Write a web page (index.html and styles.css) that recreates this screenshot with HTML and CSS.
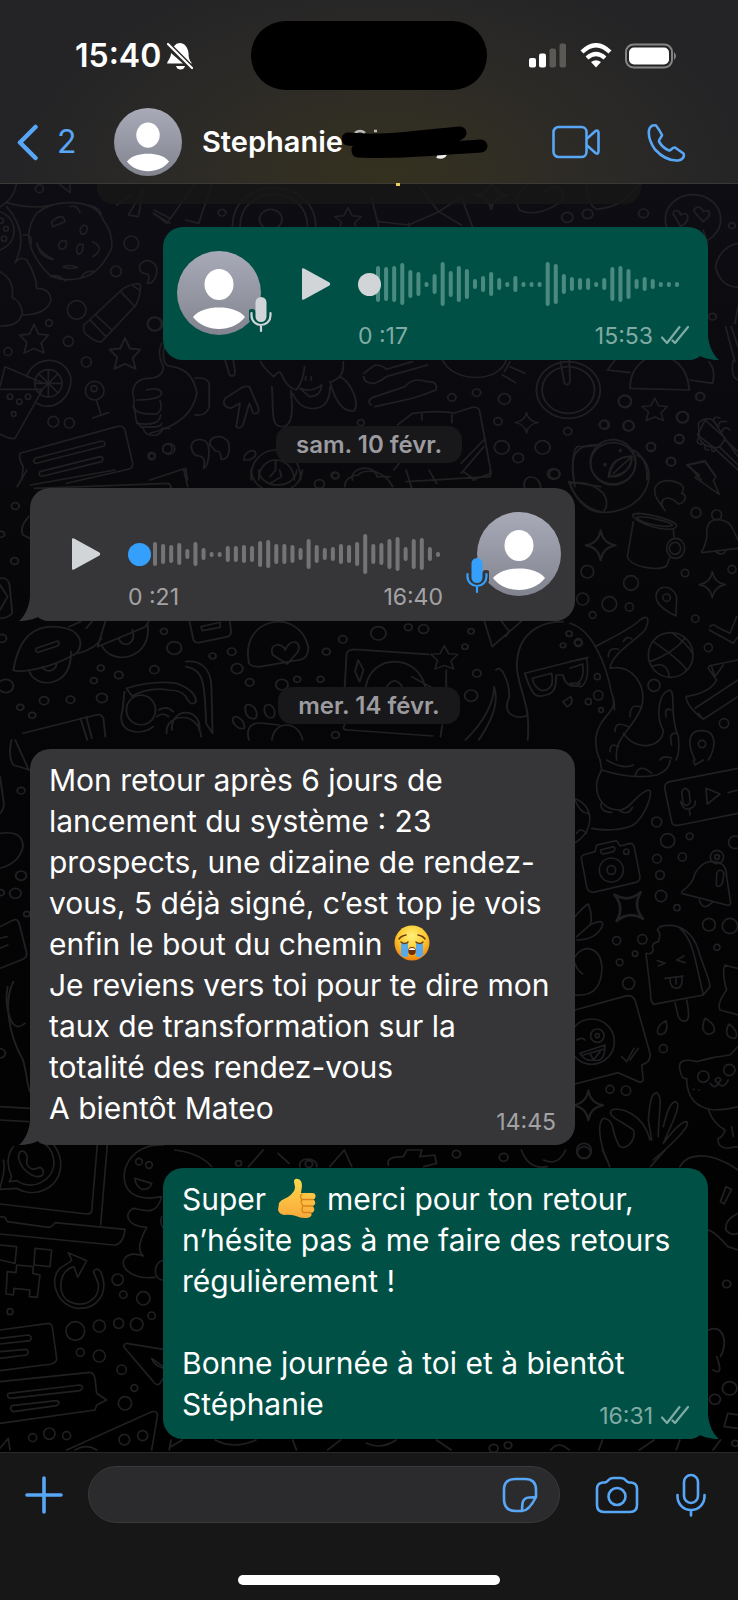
FILE: index.html
```html
<!DOCTYPE html>
<html lang="fr">
<head>
<meta charset="utf-8">
<meta name="viewport" content="width=device-width, initial-scale=1">
<title>Stephanie</title>
<link rel="stylesheet" href="styles.css">
</head>
<body>
<svg class="defs" aria-hidden="true">
  <defs>
    <linearGradient id="avatar-fill" x1="0" y1="0" x2="0" y2="1"><stop offset="0" stop-color="#a9aab8"/><stop offset="1" stop-color="#81848f"/></linearGradient>
    <radialGradient id="face-fill" cx=".5" cy=".3" r=".75"><stop offset="0" stop-color="#fff27a"/><stop offset=".5" stop-color="#fdc92f"/><stop offset="1" stop-color="#e8790c"/></radialGradient>
    <linearGradient id="thumb-fill" x1="0" y1="0" x2="0" y2="1"><stop offset="0" stop-color="#ffd84c"/><stop offset="1" stop-color="#f9a93a"/></linearGradient>
    <symbol id="avatar" viewBox="0 0 84 84">
      <circle cx="42" cy="42" r="42" fill="url(#avatar-fill)"/>
      <ellipse cx="42" cy="33.500" rx="14.500" ry="15.500" fill="#fff"/>
      <path d="M16 66C22 59 31 56.500 42 56.500S62 59 68 66C62 74 52 78 42 78S22 74 16 66z" fill="#fff"/>
    </symbol>
    <symbol id="play" viewBox="0 0 30 34"><path d="M1 2.500Q1 .5 3 1.500L28.500 15.500Q30 17 28.500 18.500L3 32.500Q1 33.500 1 31.500z" fill="currentColor"/></symbol>
    <symbol id="voice" viewBox="0 0 24 38">
      <path class="voice-edge" d="M12 7v14M3 18v2a9 9 0 0 0 18 0v-2"/>
      <rect x="6.500" y="2" width="11" height="25" rx="5.500" fill="currentColor"/>
      <path d="M2.500 18v2.500a9.500 9.500 0 0 0 19 0V18M12 30v6" fill="none" stroke="currentColor" stroke-width="2.200" stroke-linecap="round"/>
    </symbol>
    <symbol id="checks" viewBox="0 0 28 18"><path d="M1 11.500 6 17 18.500 1M11.500 14.500 14 17 27 1" fill="none" stroke="currentColor" stroke-width="2.200" stroke-linecap="round" stroke-linejoin="round"/></symbol>
    <symbol id="tail" viewBox="0 0 30 24"><path d="M19 0C20 10 24 19 30 24C22 24 15 22 11 20Q6 24 0 24V0z" fill="currentColor"/></symbol>
    <path id="star" d="M0-16 5-5 16-4 8 5 11 16 0 11-11 16-8 4-16-4-5-5z"/>
    <path id="spark" d="M0-14Q2-2 14 0 2 2 0 14-2 2-14 0-2-2 0-14z"/>
  </defs>
</svg>

<header class="top">
  <div class="status">
    <div class="clock"><span>15:40</span>
      <svg width="26" height="28" viewBox="0 0 26 28" role="img" aria-label="Silencieux"><path d="M13 1C9 1 7 4 5.500 7L22 21.500H25C22 18 21.500 15 21.500 11 21 5 17 1 13 1zM4 11C4 16 1 18 0 21.500H16zM9 24H18Q17 27.500 13.500 27.500T9 24z" fill="#fff"/><path d="M1 2 25 26" stroke="#2c2a28" stroke-width="5"/><path d="M1 2 25 26" stroke="#fff" stroke-width="2.200" stroke-linecap="round"/></svg>
    </div>
    <div class="island"></div>
    <div class="signals">
      <svg width="38" height="25" viewBox="0 0 38 25" role="img" aria-label="Réseau"><g fill="#fff"><rect y="15" width="7" height="9.500" rx="2"/><rect x="10" y="10.500" width="7" height="14" rx="2"/></g><g fill="#5a5955"><rect x="20.500" y="5.500" width="6.500" height="19" rx="2"/><rect x="30.500" y=".5" width="6.500" height="24" rx="2"/></g></svg>
      <svg width="32" height="25" viewBox="0 0 32 25" role="img" aria-label="Wi-Fi"><g fill="none" stroke="#fff" stroke-width="4.300"><path d="M2 9Q16-4.500 30 9"/><path d="M7 15Q16 7 25 15"/></g><path d="M11 19Q16 15.500 21 19L16 24.500z" fill="#fff"/></svg>
      <svg width="53" height="26" viewBox="0 0 53 26" role="img" aria-label="Batterie"><rect x="1" y="1.500" width="46" height="23" rx="7.500" fill="none" stroke="#858583" stroke-width="2"/><rect x="4" y="4.500" width="40" height="17" rx="5" fill="#fff"/><path d="M49 9q4 4 0 8z" fill="#858583"/></svg>
    </div>
  </div>
  <div class="nav">
    <button class="back" aria-label="Retour, 2"><svg width="23" height="37" viewBox="0 0 23 37"><path d="M19.500 3 4 18.500 19.500 34" fill="none" stroke="currentColor" stroke-width="4.500" stroke-linecap="round" stroke-linejoin="round"/></svg><span>2</span></button>
    <svg class="nav-avatar" role="img" aria-label="Photo"><use href="#avatar"/></svg>
    <h1 class="name">Stephanie</h1>
    <svg class="scribble" width="148" height="38" viewBox="0 0 148 38" aria-hidden="true"><path d="M13 10Q18 6 23 10M32 8h3" stroke="#bbb" stroke-width="2.500" fill="none"/><path d="M95 33Q101 35 103 31" stroke="#eee" stroke-width="4" fill="none"/><path d="M6 16C40 20 80 13 118 10 C110 18 50 22 16 27M16 28C60 30 90 26 139 23" stroke="#000" stroke-width="13" fill="none" stroke-linecap="round" stroke-linejoin="round"/></svg>
    <div class="calls">
      <button class="icon" aria-label="Appel vidéo"><svg width="48" height="34" viewBox="0 0 48 34"><g fill="none" stroke="currentColor" stroke-width="2.600" stroke-linejoin="round"><rect x="1.500" y="2" width="33" height="30" rx="5"/><path d="M34.500 14 43.500 6Q46.500 4.500 46.500 8V26Q46.500 30 43.500 28L34.500 20"/></g></svg></button>
      <button class="icon" aria-label="Appel"><svg width="39" height="39" viewBox="0 0 39 39"><path d="M2 7C3 3 6 1.500 9 2.500 11 5 13.500 9 15 12 15 14 11.500 16 12 18.500 14 22 18 26 22 27.500 24 28 25 24 28 24.500L36.500 30.500C38 34 35 37 31 37.500 22 38 14 33 8 26.500 3.500 20 1 14 2 7z" fill="none" stroke="currentColor" stroke-width="2.600" stroke-linejoin="round"/></svg></button>
    </div>
  </div>
</header>

<main class="chat">
  <svg class="wallpaper" viewBox="0 184 738 1268" preserveAspectRatio="xMidYMin slice" aria-hidden="true">
    <g transform="translate(0 180) scale(.3333)">
      <path d="M50 10Q40 60 0 80M0 95Q40 110 42 150T0 210M20 68Q100 90 155 75M20 80Q90 160 45 248Q60 228 80 240 110 290 110 325 150 325 153 360 140 405 65 405 55 440 0 438M0 275Q45 300 36 352 65 365 68 405M110 100Q150 65 215 68 290 70 310 120 340 160 335 205 310 260 270 285 210 310 155 290 110 250 92 200 75 150 110 100M70 165Q100 160 92 195M155 125Q190 95 195 125L158 140zM240 150q10-25 22-8-2 25-18 20zM175 195q10-20 25-10 0 25-20 22zM230 215q0-30 20-20 0 25-15 28zM110 190q10 30 50 48-40-5-50-48M278 185q40 20 0 45M190 260q20-8 42 2-20 8-42-2M150 288q30-5 45 15M245 290q10-20 40-15M210 80q20-8 30 18M265 75q40 10 38 30M420 255c20-25 55-10 50 25-5 20-15 32-28 30 8-20 8-28-10-30-15-5-15-15-12-25zM252 435 370 325Q420 300 422 320 420 350 408 375L305 485Q290 490 255 460 248 450 252 435M362 335 405 380M288 405 335 450M272 422 318 470M400 318 418 330"/>
      <path d="M0 620 15 560 130 610M0 628H128L45 775Q35 780 0 762M80 590C100 530 190 520 212 590 220 650 160 700 110 670M104 610a41 41 0 1 0 82 0 41 41 0 1 0-82 0M145 570v80M105 610h80M117 582l56 56M173 582l-56 56M290 662 302 702M278 714 325 698M485 490Q470 520 490 560 490 595 440 595 400 600 398 640 405 660 400 680 408 700 408 720 420 740 430 745 435 770 470 765 490 755 485 745 H510M440 630Q480 620 485 640 480 660 410 660M402 680Q405 705 470 702 490 690 480 662M410 730Q480 740 482 705M430 740Q485 745 485 730M60 820 350 740Q370 735 375 750L398 850Q398 865 385 868L200 910M60 820Q55 840 70 860L65 900M105 835 305 783Q320 785 312 798L110 850Q95 850 105 835M120 875 300 830Q315 832 305 845L130 888Q112 890 120 875M350 75 395 45M385 105 430 30 415 110zM462 90 510 115M460 100 510 130M180 14 210 38V14"/>
      <use href="#star" transform="translate(102 476) scale(2.700)"/><use href="#star" transform="translate(375 520) scale(2.900)"/>
      <circle cx="118" cy="26" r="12"/><circle cx="394" cy="190" r="22"/><circle cx="348" cy="274" r="16"/><circle cx="230" cy="390" r="28"/><circle cx="147" cy="429" r="10"/><circle cx="205" cy="484" r="15"/><circle cx="24" cy="515" r="12"/><circle cx="463" cy="432" r="21"/><circle cx="259" cy="546" r="15"/><circle cx="284" cy="632" r="28"/><circle cx="282" cy="626" r="9"/><circle cx="160" cy="725" r="16"/><circle cx="208" cy="729" r="15"/><circle cx="455" cy="828" r="11"/><circle cx="502" cy="806" r="14"/><circle cx="2" cy="122" r="8"/><circle cx="18" cy="146" r="7"/><circle cx="12" cy="176" r="8"/><circle cx="30" cy="650" r="8"/><circle cx="58" cy="665" r="8"/><circle cx="84" cy="650" r="8"/><circle cx="41" cy="702" r="7"/>
    </g>
    <g transform="translate(150 180) scale(.375 .3333)">
      <path d="M10 100 45 130 120 12M95 120 130 130 165 12M220 140C220 -15 440 -15 442 140M240 140C240 10 420 10 420 140M590 50 610 140M610 125 690 135 770 95 830 50 860 140M770 95 720 20M770 95 830 135M690 140V130M1050 40C1080 0 1110 30 1100 60 1070 90 1020 110 985 90 970 60 985 30 1010 12M1165 12Q1165 70 1190 88 1260 80 1290 30L1310 12M1400 110c-15-15 10-30 15-5 20-15 30 15 0 35zM1455 100c-15-15 15-30 20-5 20-10 25 10 0 30zM1475 150 1485 185M1568 190Q1520 200 1508 260 1520 320 1568 322M1535 440 1560 545M1550 440 1568 500M1568 380 1560 430"/>
      <circle cx="322" cy="118" r="30"/><circle cx="1448" cy="118" r="74"/>
      <path d="M40 490Q25 560 60 560 115 570 125 640 110 730 0 760M120 595Q150 590 158 610V680Q150 710 120 705M200 540 212 585Q225 595 227 575L222 540M230 740Q240 750 248 735L265 670 275 700Q295 705 288 680L265 620Q250 615 235 630L200 655Q190 680 215 685L240 670zM330 590Q300 560 295 545M330 590C360 550 340 610 390 630Q410 600 412 560M515 545Q520 590 485 605M325 620C330 690 320 740 352 740 385 740 380 670 375 630M480 605C490 650 510 700 545 692 560 660 530 600 505 590M380 640Q400 690 440 685 480 680 480 620M400 625Q430 640 458 615 455 650 425 650zM415 590V600M430 590V600M570 590Q570 610 600 610 620 600 630 590L740 555M570 580 600 555Q620 555 630 568L700 545M590 675Q575 660 600 650L680 620Q700 590 740 605 770 605 762 630 730 645 700 655L600 680M780 540C810 610 930 610 950 540M940 585 975 608M960 560 1000 580M960 545 945 575M1220 570 1240 540M1220 570 1280 578M1280 625C1280 500 1430 490 1438 630zM1440 600 1500 610Q1510 570 1490 545M660 735 700 700Q780 690 810 700L860 682Q880 680 880 700L910 880 860 900M725 700V720M805 705V728M650 870 680 830M830 850 890 780M830 880 890 800M1115 545a85 85 0 1 0 1 0M1115 560a70 70 0 1 0 1 0M1095 545 1105 610Q1115 620 1120 605L1118 540M0 900 95 865 100 900M110 800c0-25 35-30 45-5 5 25 0 65-12 70 5-25 0-35-12-37-15 0-20-15-21-28M160 795c-5-30 40-35 50-5 5 30-5 50-20 48 0-20-5-25-15-25zM250 840c0-30 40-40 30-10l-15 10zM270 900C260 790 400 770 402 900M290 900C290 820 380 820 385 900M335 840V870L320 890M540 900C530 860 600 850 605 890H640M1130 900C1120 830 1130 790 1200 795M1175 850a60 62 0 1 1 120 0 60 62 0 1 1-120 0M1290 810Q1330 840 1325 900M1225 890Q1230 830 1285 830 1280 880 1240 890zM1480 720 1530 770 1568 830M1480 720 1460 765 1500 800 1568 870M1435 855 1480 845 1505 885M1435 855 1470 900"/>
      <use href="#star" transform="translate(528 118) scale(2.200)"/><use href="#spark" transform="translate(910 45) scale(3)"/><use href="#star" transform="translate(1346 688) scale(2.100)"/><use href="#spark" transform="translate(1004 728) scale(2.200)"/>
      <circle cx="192" cy="98" r="10"/><circle cx="1113" cy="112" r="15"/><circle cx="1167" cy="102" r="14"/><circle cx="1316" cy="100" r="13"/><circle cx="1552" cy="137" r="9"/><circle cx="1500" cy="410" r="10"/><circle cx="14" cy="432" r="20"/><circle cx="805" cy="652" r="11"/><circle cx="871" cy="638" r="11"/><circle cx="945" cy="657" r="16"/><circle cx="1266" cy="664" r="17"/><circle cx="1467" cy="650" r="12"/><circle cx="1420" cy="711" r="16"/><circle cx="928" cy="724" r="11"/><circle cx="1114" cy="754" r="11"/><circle cx="1210" cy="734" r="12"/><circle cx="1276" cy="738" r="15"/><circle cx="1411" cy="777" r="12"/><circle cx="938" cy="802" r="20"/><circle cx="1047" cy="802" r="20"/><circle cx="1336" cy="800" r="12"/><circle cx="982" cy="834" r="14"/><circle cx="1389" cy="845" r="12"/><circle cx="1076" cy="882" r="16"/><circle cx="50" cy="807" r="16"/><circle cx="5" cy="828" r="8"/><circle cx="562" cy="728" r="9"/><circle cx="493" cy="886" r="10"/>
    </g>
    <g transform="translate(0 470) scale(.383 .3333)">
      <path d="M70 0 45 50M480 0 490 50M80 45 300 0M90 55 440 40Q450 50 445 54M655 0Q660 40 685 54M790 0Q785 40 760 54M675 0C680 60 770 60 775 0M730 0 735 20 705 40M900 50Q900 20 935 15 945 0 980 5 1010 15 1025 50M1060 0 1075 54M1060 35 1280 20V0M1120 0 1140 40M1210 5 1240 30M1370 54C1360 10 1410 10 1412 54M1485 35 1568 50M1485 35Q1510 110 1568 125M75 140Q50 170 60 195L78 205M0 325Q20 320 25 345L32 430Q20 445 0 445M0 345 20 380 0 420"/>
      <path d="M35 600C50 500 90 460 160 472 210 480 220 520 200 550 140 590 80 605 40 603zM95 535 150 513Q158 520 150 528L100 547Q90 545 95 535M205 550Q250 535 265 505M75 600C90 660 190 655 185 545M110 590C120 610 145 605 148 580M180 470 210 455M225 475 240 455M255 530 275 455M255 530 380 470 388 455M265 525C290 590 400 570 385 460M310 505C320 540 360 520 345 480M495 455 505 510Q510 520 520 518L595 500Q605 495 603 480L600 455M525 470 575 457V472L528 482zM650 580C625 440 780 410 805 530 805 560 795 570 770 572L680 590Q655 590 650 580M712 555C700 515 740 520 745 540 755 505 790 510 778 545L750 582zM905 550Q910 538 925 538L1120 553M905 550 900 650M935 570l14 30-10 35-12-30zM955 650C970 550 1090 550 1110 650M1010 650Q1030 615 1050 650M1075 620 1130 655M1165 600V650M1265 455 1285 530 1360 455M1310 455 1330 485 1320 500"/>
      <path d="M485 575C520 570 550 590 552 650L555 790M485 590C530 600 535 630 538 760L555 790M330 655Q400 630 460 640 510 660 512 695 500 710 490 690 480 660 440 660 390 650 345 678zM325 665 320 720C300 790 370 800 400 770M435 790C430 730 520 720 525 800M330 720a36 42 0 1 0 76 0 36 42 0 1 0-76 0M450 780a36 42 0 1 1 70 0M415 720Q435 705 452 725M410 740Q425 725 440 740M60 790 250 735Q265 730 270 745L275 800M210 745 228 810M225 740 240 805M640 715C640 690 680 710 668 745 650 750 640 735 640 715M690 715C695 690 725 710 715 740 700 750 690 735 690 715M608 745C615 730 640 750 638 775 620 780 605 760 608 745M650 810C640 770 660 755 690 760L730 765M710 810C715 750 780 750 790 810M900 765Q890 780 910 780L1130 798M1155 765 1150 800"/>
      <use href="#star" transform="translate(1160 562) scale(2.200)"/>
      <circle cx="40" cy="108" r="10"/><circle cx="38" cy="273" r="10"/><circle cx="3" cy="193" r="9"/><circle cx="876" cy="17" r="9"/><circle cx="834" cy="42" r="13"/><circle cx="1448" cy="12" r="14"/><circle cx="428" cy="484" r="9"/><circle cx="455" cy="534" r="19"/><circle cx="555" cy="558" r="9"/><circle cx="605" cy="545" r="11"/><circle cx="619" cy="596" r="15"/><circle cx="852" cy="545" r="10"/><circle cx="895" cy="508" r="11"/><circle cx="988" cy="490" r="20"/><circle cx="1066" cy="472" r="10"/><circle cx="1106" cy="477" r="13"/><circle cx="1214" cy="530" r="8"/><circle cx="1230" cy="484" r="8"/><circle cx="263" cy="594" r="9"/><circle cx="310" cy="615" r="11"/><circle cx="245" cy="632" r="9"/><circle cx="403" cy="599" r="12"/><circle cx="15" cy="648" r="20"/><circle cx="53" cy="712" r="9"/><circle cx="115" cy="692" r="12"/><circle cx="184" cy="689" r="11"/><circle cx="266" cy="684" r="14"/><circle cx="84" cy="736" r="9"/><circle cx="652" cy="637" r="11"/><circle cx="736" cy="644" r="16"/><circle cx="776" cy="628" r="9"/><circle cx="837" cy="628" r="9"/><circle cx="1245" cy="610" r="11"/><circle cx="1230" cy="677" r="17"/><circle cx="876" cy="795" r="10"/><circle cx="1486" cy="491" r="8"/><circle cx="1510" cy="518" r="9"/><circle cx="1470" cy="526" r="7"/><circle cx="5" cy="505" r="12"/>
      <path d="M1350 600C1345 500 1400 455 1470 455M1350 600C1360 680 1385 700 1378 810M1295 600C1310 580 1330 640 1330 680 1300 750 1380 750 1378 730M1290 650C1290 700 1260 760 1215 810M1290 650C1305 700 1280 760 1250 810M1370 610 1535 562M1370 610C1390 680 1400 685 1425 675 1455 670 1452 630 1452 615H1470C1475 650 1500 655 1515 640M1390 625 1440 610Q1450 660 1415 662 1395 655 1390 625M1470 695l20-15q10 20-10 30z"/>
    </g>
    <g transform="translate(570 360) scale(.3333)">
      <path d="M490 0Q480 50 504 60M15 380C5 330 5 250 30 260L75 258M200 285C260 310 250 420 150 450 80 470 40 450 10 395L0 370Q60 360 100 400 120 430 100 455M350 315 405 302 438 350 430 362 448 403 375 352 388 345zM270 430C240 390 255 360 300 362 345 370 345 385 335 400 355 405 345 430 325 432 305 410 275 405 275 435L285 452zM188 465C200 450 320 480 320 498 310 525 190 490 188 465M200 472C215 465 305 485 308 496 290 505 210 490 200 472M190 485 172 590C180 620 260 635 290 618L298 595M310 510 312 530M290 565a27 30 0 1 0 54 0 27 30 0 1 0-54 0M298 565a17 18 0 1 0 34 0 17 18 0 1 0-34 0M395 575Q415 540 410 510 415 480 440 478 480 480 490 510L504 540M395 578 504 565M435 572Q455 595 470 568M318 768 320 710C310 675 260 670 258 710 260 735 290 755 318 768M235 885a67 67 0 1 0 134 0 67 67 0 1 0-134 0M250 845Q330 900 350 930M240 905Q310 880 345 835M305 818Q350 850 368 880M245 920Q290 900 298 950M385 190Q400 170 430 180L465 235Q450 270 430 262 400 260 388 235zM465 240 504 275M450 262 504 315M430 185q0-20 20-10M445 200q0-20 25-15M455 215q10-20 25-5M385 235q-10 15 10 18M405 255q-5 15 12 15M425 265q0 15 14 5"/>
      <path d="M75 860C110 840 180 810 210 780 235 760 240 780 225 810 200 840 125 880 120 925 190 910 230 980 215 1040 190 1110 130 1130 140 1200M0 790C70 810 110 920 125 1000 150 1060 90 1060 78 1130Q75 1170 90 1200M160 1120C200 1180 280 1160 280 1110 260 1080 260 1000 300 990 320 1000 295 1060 325 1130Q330 1180 318 1200M115 890q0-30 30-22M160 845q10-20 25-8M180 1070q0-40 30-30M135 1115q0-35 40-15M120 1175q0-30 25-15M288 1070q-5-30 15-20M305 1155q-10-40 15-35M125 1000q10 20 8 50M420 800Q430 790 440 800L480 820 500 770M418 810 490 850 504 830M348 1010Q420 1000 440 960L415 925Q415 915 430 915L504 900M348 1010Q350 1040 400 1078L504 1010M375 1045 504 960M385 1060 400 1078M425 920 435 950 460 915M375 1200C350 1150 355 1110 395 1112 440 1110 440 1160 415 1200M270 1200Q280 1185 305 1195M0 905 50 895Q60 960 35 980L0 975M0 925 38 912Q45 960 20 970H0"/>
      <use href="#spark" transform="translate(92 556) scale(3.200)"/><use href="#spark" transform="translate(427 674) scale(2.800)"/>
      <circle cx="129" cy="307" r="68"/><path d="M115 350C120 310 140 290 185 288 190 325 160 345 115 350zM130 340 185 290"/><circle cx="151" cy="272" r="3"/><circle cx="105" cy="314" r="3"/>
      <circle cx="165" cy="124" r="19"/><circle cx="391" cy="110" r="12"/><circle cx="338" cy="172" r="17"/><circle cx="104" cy="194" r="14"/><circle cx="176" cy="197" r="15"/><circle cx="328" cy="237" r="14"/><circle cx="243" cy="261" r="13"/><circle cx="304" cy="305" r="13"/><circle cx="378" cy="458" r="15"/><circle cx="440" cy="465" r="15"/><circle cx="52" cy="635" r="19"/><circle cx="183" cy="669" r="22"/><circle cx="38" cy="717" r="18"/><circle cx="118" cy="732" r="22"/><circle cx="178" cy="741" r="12"/><circle cx="68" cy="765" r="10"/><circle cx="290" cy="713" r="11"/><circle cx="345" cy="639" r="11"/><circle cx="486" cy="628" r="12"/><circle cx="376" cy="776" r="11"/><circle cx="415" cy="863" r="12"/><circle cx="252" cy="976" r="18"/><circle cx="25" cy="848" r="12"/><circle cx="82" cy="950" r="9"/><circle cx="85" cy="1006" r="14"/><circle cx="55" cy="1025" r="9"/><circle cx="93" cy="1050" r="7"/><circle cx="462" cy="1090" r="14"/><circle cx="396" cy="1152" r="11"/>
    </g>
    <g transform="translate(570 760) scale(.3333)">
      <path d="M90 0 95 30C60 90 90 150 150 150M150 150C180 150 200 100 235 90 255 90 225 170 190 195 150 215 90 210 65 205M95 30Q190 60 260 45 300 30 300 0M110 0Q160 30 190 15M195 50q10-45 50-10M95 125q-10 30 30 32M145 150q30 20 42-8M10 115C70 130 80 210 15 248M15 120Q30 160 55 160M20 220q10-20 30 0M285 90Q280 70 300 65L504 25M285 90 305 185Q310 200 330 195L504 160M335 95q10-20 22 0l4 30q-10 20-22 5zM332 125q10 30 30 20 15-5 14-22M358 145 360 165M408 85 450 102 412 132zM475 98 504 90M370 0 375 15 400 0M35 300Q30 285 50 282L75 275 80 255 140 242 150 258 180 250Q190 250 193 262L210 350Q210 365 195 368L70 397Q55 397 50 380zM92 270 130 260Q140 265 130 275L100 282Q90 280 92 270M335 395Q370 370 375 340 400 300 430 305 470 305 470 350L482 430Q480 438 470 435L335 400M440 340q10-20 22 0l-5 30q-10 15-18 5zM388 420q10 35 38 8M15 470Q40 440 55 432 70 470 60 495 100 475 98 495 80 540 20 540M60 495 20 530M15 590C40 550 90 560 96 620 95 670 80 710 15 705M15 610Q20 630 38 642M270 500C330 485 370 520 385 570 400 620 420 660 420 680L400 705 250 733Q240 720 242 700L228 580Q245 585 250 570 240 550 265 545 275 520 262 510zM330 505C370 540 375 600 400 705M262 602 285 610 265 618M342 588 320 600 345 608M285 655 340 648M300 656Q300 685 322 685 340 680 335 650M318 655V672M315 728 325 770Q335 790 352 780 360 770 350 720M15 750 160 710Q185 700 195 720L240 880Q245 905 215 915L220 960Q215 970 205 965L145 938 15 972M30 880 105 855Q105 910 70 900 45 905 30 880M40 885 100 868M60 880 70 900 90 875M20 840q15-10 25 0M155 890 170 905 192 865M180 900 205 865M262 815Q262 795 288 782 295 810 282 820 265 830 262 815M398 805Q400 785 405 775 440 795 432 815 410 835 398 805M470 815Q470 800 478 792 510 820 495 835 470 835 470 815"/>
      <path d="M480 885 504 860M480 885Q430 890 380 905 320 890 330 930 335 960 350 955 350 1040 430 1050 470 1050 504 1040M415 1050Q430 1090 465 1110 460 1130 445 1135 440 1160 470 1165L504 1160M485 1100 490 1130M435 960q10-15 18 0l-10 10zM420 970q15 20 25 0 15 20 30-10M370 988h2M386 990h2M465 615Q480 620 504 625M465 615Q455 640 470 690 440 730 450 750L504 765M240 1140C220 1060 150 1040 125 1050 110 1070 150 1080 190 1110 200 1140 170 1170 150 1160 120 1120 140 1080 100 1075 80 1090 90 1150 110 1200M245 1140 235 1080C240 1020 245 1000 260 998 280 1010 265 1060 265 1130M280 1100C290 1060 300 1025 318 1025 335 1035 310 1080 280 1150M280 1150C310 1110 335 1085 350 1085 365 1095 310 1150 250 1200"/>
      <use href="#spark" transform="translate(176 440) rotate(40) scale(4)"/><use href="#spark" transform="translate(55 1036) scale(3.200)"/>
      <circle cx="124" cy="330" r="36"/><circle cx="124" cy="330" r="13"/><circle cx="169" cy="275" r="8"/><circle cx="441" cy="291" r="20"/><circle cx="441" cy="291" r="7"/><circle cx="65" cy="845" r="68"/><circle cx="82" cy="827" r="20"/><circle cx="82" cy="827" r="6"/><circle cx="400" cy="950" r="17"/><circle cx="478" cy="930" r="17"/><circle cx="260" cy="186" r="15"/><circle cx="293" cy="242" r="21"/><circle cx="359" cy="229" r="10"/><circle cx="261" cy="296" r="13"/><circle cx="337" cy="291" r="12"/><circle cx="270" cy="345" r="13"/><circle cx="273" cy="408" r="17"/><circle cx="321" cy="443" r="9"/><circle cx="417" cy="494" r="19"/><circle cx="480" cy="498" r="23"/><circle cx="441" cy="562" r="9"/><circle cx="217" cy="538" r="14"/><circle cx="140" cy="542" r="12"/><circle cx="195" cy="581" r="8"/><circle cx="149" cy="607" r="10"/><circle cx="176" cy="670" r="18"/><circle cx="280" cy="866" r="12"/><circle cx="120" cy="988" r="12"/><circle cx="168" cy="992" r="14"/><circle cx="42" cy="1172" r="22"/><circle cx="495" cy="247" r="19"/>
    </g>
    <g transform="translate(0 740) scale(.383 .3333)">
      <path d="M30 0Q20 50 35 75L78 90M40 0 75 90M0 280Q60 270 60 320 50 370 0 385M0 560 35 540Q45 535 50 550L70 640Q70 655 55 660L0 685M0 595 18 590M0 625 20 615M35 725C10 780 20 880 60 960 70 1000 70 1030 78 1055M20 740C10 800 30 890 65 850M0 1100 78 1105M0 1140 75 1145M0 110 10 190Q10 210 0 220"/>
      <circle cx="55" cy="152" r="10"/><circle cx="55" cy="407" r="14"/><circle cx="40" cy="460" r="15"/><circle cx="2" cy="458" r="9"/><circle cx="70" cy="522" r="8"/><circle cx="0" cy="940" r="14"/>
    </g>
    <g transform="translate(0 1140) scale(.3333)">
      <path d="M10 60C20 100 0 130 0 148L50 145C100 175 175 150 182 80 185 40 160 5 140 0M40 20C15 50 25 90 35 110L28 125 50 122C100 155 160 120 162 70 160 30 140 10 120 8M60 35Q75 28 82 50L80 70Q85 85 100 88L120 82Q135 90 128 105 115 115 95 105 60 85 55 50zM292 14 275 215Q272 222 260 222L0 192M322 14 302 255M0 230 15 232 22 245 145 262Q155 262 165 248L375 268Q370 315 340 315L0 282M0 315 50 320 45 370 0 360M105 325 155 330 150 380 102 375zM50 375 100 380 98 400 120 405 112 472 88 470 90 450 42 445 40 465 18 462 22 395 48 398zM205 338 260 362 233 412 222 380C180 390 170 450 200 480 250 510 300 480 295 430L280 395Q290 380 302 395C330 460 290 510 230 505 160 490 150 410 180 385 200 370 215 365 215 360zM0 570 145 550Q155 550 157 562L170 655Q170 668 155 672L0 692M0 595 85 585Q100 590 90 602L0 612M0 635 80 628Q90 635 80 645L0 655M0 725 270 697Q282 700 285 715L290 760 320 780 290 795 285 810 0 850M25 760 240 735Q255 740 240 752L30 775Q18 770 25 760M35 797 170 782Q185 787 170 797L40 815Q28 810 35 797M200 930 455 815Q475 812 472 830L455 930M225 930Q260 910 290 930M490 15C390 10 350 100 385 150 410 180 460 175 485 170 470 230 430 210 400 205 370 220 380 260 440 262 420 300 410 330 430 348 380 330 360 360 375 385 400 415 440 415 465 412M405 115 455 130Q450 150 425 148 405 135 405 115M490 360Q460 370 468 405 475 420 490 420M490 628 380 610Q365 615 375 625L460 725Q470 740 480 730L490 715M490 680 455 655Q460 675 490 685M0 925 25 895 30 930M485 230Q478 250 490 265"/>
      <circle cx="417" cy="65" r="10"/><circle cx="447" cy="75" r="10"/><circle cx="353" cy="419" r="17"/><circle cx="370" cy="464" r="11"/><circle cx="430" cy="475" r="20"/><circle cx="455" cy="527" r="11"/><circle cx="30" cy="515" r="9"/><circle cx="226" cy="573" r="28"/><circle cx="298" cy="558" r="18"/><circle cx="356" cy="550" r="15"/><circle cx="410" cy="553" r="19"/><circle cx="241" cy="637" r="12"/><circle cx="298" cy="648" r="18"/><circle cx="365" cy="689" r="14"/><circle cx="403" cy="744" r="10"/><circle cx="375" cy="790" r="20"/><circle cx="98" cy="893" r="12"/><circle cx="148" cy="881" r="17"/><circle cx="200" cy="887" r="12"/><circle cx="373" cy="899" r="16"/><circle cx="428" cy="887" r="15"/>
    </g>
    <g transform="translate(160 1150) scale(.3687 .3333)">
      <path d="M40 0Q110 10 140 50M240 50 280 0M320 10 350 40M380 50C370 20 430 20 425 50M460 50 500 0 520 50M620 45Q610 20 660 20L670 0H710L705 20 745 15 750 40 715 50M980 0Q1000 60 1050 50M1100 0Q1080 50 1040 30M1220 50Q1210 20 1200 0M1330 50 1370 0M1410 50C1430 10 1490 0 1568 60M1520 155 1535 110 1550 118 1530 162zM1568 190Q1530 210 1535 240 1550 260 1568 250M1488 240Q1510 250 1540 290L1568 300M1488 540C1530 520 1540 580 1520 620M1500 660Q1530 680 1510 620M1568 795 1540 790 1530 830 1568 835M30 870 25 900M30 890 60 870M150 870Q200 900 260 870M360 870 370 900M455 900 490 870M560 880Q600 900 640 870M750 870 790 900M1060 900Q1080 870 1110 900M1200 870 1190 900M1300 900 1340 870M1410 870 1400 900M1520 870 1500 900"/>
      <circle cx="213" cy="40" r="8"/><circle cx="404" cy="42" r="10"/><circle cx="804" cy="12" r="11"/><circle cx="932" cy="22" r="12"/><circle cx="1150" cy="8" r="18"/><circle cx="1537" cy="402" r="11"/><circle cx="1545" cy="715" r="20"/><circle cx="1505" cy="748" r="15"/><circle cx="944" cy="886" r="10"/><circle cx="905" cy="895" r="12"/><circle cx="1560" cy="880" r="9"/>
    </g>
  </svg>

  <div class="notice" aria-hidden="true"></div>

  <article class="bubble out voice">
    <svg class="tail" aria-hidden="true"><use href="#tail"/></svg>
    <div class="who"><svg class="pic" role="img" aria-label="Photo"><use href="#avatar"/></svg><svg class="mic" aria-hidden="true"><use href="#voice"/></svg></div>
    <button class="play" aria-label="Lire"><svg width="30" height="34"><use href="#play"/></svg></button>
    <div class="track">
      <div class="scrub">
        <svg class="wave" viewBox="0 0 300 48" preserveAspectRatio="none" aria-hidden="true"><path d="M2 8v32M10 9v30M18 8v32M26 5v38M34 12v24M42 14v20M50 24v1M58 16v16M66 4v40M74 13v22M82 8v32M90 11v26M98 21v6M106 18v12M114 14v20M122 20v8M130 24v1M138 18v12M146 24v1M154 24v1M162 24v1M170 4v40M178 6v36M186 16v16M194 19v10M202 20v8M210 20v8M218 24v1M226 20v8M234 9v30M242 8v32M250 11v26M258 21v6M266 19v10M274 21v6M282 24v1M290 24v1M298 24v1"/></svg>
        <input type="range" value="0" aria-label="Position de lecture">
      </div>
      <div class="meta"><span>0 :17</span><span class="stamp">15:53 <svg class="checks" role="img" aria-label="Distribué"><use href="#checks"/></svg></span></div>
    </div>
  </article>

  <time class="day">sam. 10 févr.</time>

  <article class="bubble in voice">
    <svg class="tail" aria-hidden="true"><use href="#tail"/></svg>
    <button class="play" aria-label="Lire"><svg width="30" height="34"><use href="#play"/></svg></button>
    <div class="track">
      <div class="scrub">
        <svg class="wave" viewBox="0 0 284 48" preserveAspectRatio="none" aria-hidden="true"><path d="M2 14v20M10 16v16M18 17v14M26 15v18M34 21v6M42 14v20M50 20v8M58 24v1M66 24v1M74 18v12M82 18v12M90 17v14M98 18v12M106 13v22M114 12v24M122 16v16M130 16v16M138 17v14M146 20v8M154 11v26M162 17v14M170 20v8M178 19v10M186 16v16M194 17v14M202 14v20M210 6v36M218 16v16M226 15v18M234 11v26M242 9v30M250 19v10M258 11v26M266 10v28M274 19v10M282 24v1"/></svg>
        <input type="range" value="0" aria-label="Position de lecture">
      </div>
      <div class="meta"><span>0 :21</span><span class="stamp">16:40</span></div>
    </div>
    <div class="who"><svg class="pic" role="img" aria-label="Photo"><use href="#avatar"/></svg><svg class="mic" aria-hidden="true"><use href="#voice"/></svg></div>
  </article>

  <time class="day">mer. 14 févr.</time>

  <article class="bubble in text">
    <svg class="tail" aria-hidden="true"><use href="#tail"/></svg>
    <p>Mon retour après 6 jours de lancement du système : 23 prospects, une dizaine de rendez-vous, 5 déjà signé, c’est top je vois enfin le bout du chemin <svg class="emoji" viewBox="0 0 36 36" role="img" aria-label="😭"><circle cx="18" cy="18" r="17.500" fill="url(#face-fill)"/><path d="M7 18h7v13q-4 3-7-1zM22 18h7v12q-3 4-7 1z" fill="#5aa9e8"/><path d="M7 17q4 3 7 0M22 17q4 3 7 0M5 14q2-3 7-4M31 14q-2-3-7-4" fill="none" stroke="#6b3b10" stroke-width="1.500" stroke-linecap="round"/><ellipse cx="18" cy="26" rx="3.800" ry="4" fill="#6b2f0c"/><path d="M15 24q3-2 6 0v1h-6z" fill="#fff"/></svg><br>Je reviens vers toi pour te dire mon taux de transformation sur la totalité des rendez-vous<br>A bientôt Mateo</p>
    <span class="stamp">14:45</span>
  </article>

  <article class="bubble out text">
    <svg class="tail" aria-hidden="true"><use href="#tail"/></svg>
    <p>Super <svg class="emoji thumb" viewBox="0 0 38 40" role="img" aria-label="👍"><path d="M1 25Q3 22 6 21L10 19Q17 14 17 9L16 4Q16 0 20 1 24 2 24 8L23 15H34Q38 15 37.500 19 37 21 35 21.500 38 23 37 26 36 28 34.500 28 37 30 36 33 35 35 33 35 35 38 31 39.500 24 41 18 38 12 36 6 37 1 36 0 32z" fill="url(#thumb-fill)"/><path d="M24 21.500H35M25 28H34.500M25 34.500H33M24 16Q21 18 24 21.500 22 24 25 28 23 31 25 34.500" fill="none" stroke="#d98218" stroke-width="1.300" stroke-linecap="round"/></svg> merci pour ton retour, n’hésite pas à me faire des retours régulièrement !<br><br>Bonne journée à toi et à bientôt Stéphanie</p>
    <span class="stamp">16:31 <svg class="checks" role="img" aria-label="Distribué"><use href="#checks"/></svg></span>
  </article>
</main>

<footer class="composer">
  <div class="row">
    <button class="icon" aria-label="Joindre"><svg width="38" height="38" viewBox="0 0 38 38"><path d="M19 2v34M2 19h34" stroke="currentColor" stroke-width="3.600" stroke-linecap="round"/></svg></button>
    <div class="field">
      <input type="text" aria-label="Message">
      <button class="icon" aria-label="Autocollants"><svg width="36" height="36" viewBox="0 0 36 36"><path d="M20 34H14Q2 34 2 22V13Q2 2 13 2H23Q34 2 34 13V20Q27 34 20 34zM20 34Q20 31 20.500 26 22 20 28 20.500 32 20.500 34 20" fill="none" stroke="currentColor" stroke-width="2.600" stroke-linejoin="round"/></svg></button>
    </div>
    <button class="icon" aria-label="Appareil photo"><svg width="44" height="38" viewBox="0 0 44 38"><g fill="none" stroke="currentColor" stroke-width="2.600"><path d="M2 13Q2 7 8 6.500H10Q12 6 13 4.500 15 2 18 2H26Q29 2 31 4.500 32 6 34 6.500H36Q42 7 42 13V29Q42 36 35 36H9Q2 36 2 29z"/><circle cx="22" cy="20.500" r="8.500"/></g></svg></button>
    <button class="icon" aria-label="Message vocal"><svg width="32" height="44" viewBox="0 0 32 44"><g fill="none" stroke="currentColor" stroke-width="2.600" stroke-linecap="round"><rect x="9" y="2" width="14" height="28" rx="7"/><path d="M2.500 22v1.500a13.500 13.500 0 0 0 27 0V22M16 37v5.500"/></g></svg></button>
  </div>
  <div class="home"></div>
</footer>
</body>
</html>
```
FILE: styles.css
```css
* { box-sizing: border-box; }

body {
  margin: 0;
  min-height: 100vh;
  display: flex;
  flex-direction: column;
  background: #000;
  color: #fff;
  font-family: Inter, "Liberation Sans", sans-serif;
}

button {
  padding: 0;
  border: 0;
  background: none;
  color: inherit;
  font: inherit;
}

svg { display: block; flex: none; }
.defs { position: absolute; width: 0; height: 0; }
.icon { color: #58a6f6; }

/* Header */
.top {
  height: 184px;
  padding-top: 21px;
  border-bottom: 1px solid #3a3936;
  background: radial-gradient(ellipse 50% 120% at 52% 100%, #35311f, #2c2a27 60%, #242426);
}

.status {
  display: grid;
  grid-template-columns: 1fr 236px 1fr;
  align-items: center;
}

.clock {
  display: flex;
  align-items: center;
  gap: 6px;
  padding-left: 75px;
  font-size: 32px;
  font-weight: 600;
  line-height: 40px;
}

.island { height: 69px; border-radius: 35px; background: #000; }

.signals {
  display: flex;
  align-items: center;
  justify-content: flex-end;
  gap: 13px;
  padding-right: 60px;
}

.nav {
  display: flex;
  align-items: center;
  height: 68px;
  margin-top: 18px;
  padding: 0 52px 0 16px;
}

.back {
  display: flex;
  align-items: center;
  gap: 18px;
  width: 98px;
  color: #58a6f6;
  font-size: 32px;
  line-height: 40px;
}

.nav-avatar { width: 68px; height: 68px; }

.name {
  margin: 0 0 0 20px;
  font-size: 29px;
  font-weight: 600;
  line-height: 40px;
}

.scribble { margin-left: -1px; }
.calls { display: flex; align-items: center; gap: 47px; margin-left: auto; }

/* Conversation */
.chat {
  position: relative;
  flex: 1;
  display: flex;
  flex-direction: column;
  padding: 0 30px 13px;
  background: linear-gradient(#0e0d13, #060608 35%, #000);
}

.wallpaper {
  position: absolute;
  inset: 0;
  width: 100%;
  height: 100%;
  fill: none;
  stroke: #202023;
  stroke-width: 5;
  stroke-linejoin: round;
  stroke-linecap: round;
}

.wallpaper use { stroke-width: 2; }

.notice {
  position: relative;
  height: 20px;
  margin: 0 67px 23px;
  border-radius: 0 0 16px 16px;
  background: rgb(24 24 24 / 85%);
}

.notice::before {
  content: "";
  position: absolute;
  top: -1px;
  left: 55%;
  width: 4px;
  height: 3px;
  background: #e8d060;
}

.bubble {
  position: relative;
  width: calc(100% - 133px);
  border-radius: 20px;
}

.out { --fill: #005046; align-self: flex-end; }
.in { --fill: #363638; }
.out, .in { background: var(--fill); color: var(--fill); }

.tail { position: absolute; bottom: 0; width: 30px; height: 24px; }
.out .tail { right: -11px; }
.in .tail { left: -11px; transform: scaleX(-1); }

.voice { display: flex; align-items: flex-start; height: 133px; padding: 24px 19px 0 14px; }
.voice.in { padding: 24px 14px 0 41px; }

.who { position: relative; }
.pic { width: 84px; height: 84px; }
.mic { position: absolute; bottom: 2px; width: 24px; height: 38px; }
.out .mic { right: -12px; color: #d1d5d8; }
.in .mic { left: -12px; color: #35a0fb; }
.voice-edge { fill: none; stroke: var(--fill); stroke-width: 8; stroke-linecap: round; }

.play { margin: 16px 27px 0 0; color: #d1d5d8; }
.out .play { margin-left: 40px; }
.in .play { margin-top: 25px; }

.track { flex: 1; padding-top: 9px; }
.in .track { margin-right: 34px; padding-top: 18px; }
.scrub { position: relative; height: 48px; }

.wave {
  width: calc(100% - 28px);
  height: 48px;
  margin-left: 18px;
  fill: none;
  stroke: #4a8a80;
  stroke-width: 4;
  stroke-linecap: round;
}

.in .wave { margin-left: 25px; stroke: #747476; }

.scrub input {
  position: absolute;
  inset: 0;
  width: 100%;
  height: 48px;
  margin: 0;
  appearance: none;
  background: none;
}

.scrub input::-webkit-slider-thumb {
  appearance: none;
  width: 23px;
  height: 23px;
  border-radius: 50%;
  background: #d1d5d8;
}

.in .scrub input::-webkit-slider-thumb { background: #35a0fb; }

.meta { display: flex; justify-content: space-between; margin-top: 15px; }
.in .meta { margin-top: 6px; }
.meta, .stamp { font-size: 23px; line-height: 26px; color: #a3a3a5; }
.out .meta, .out .stamp { color: #80aba4; }
.stamp { display: flex; gap: 8px; }
.checks { width: 28px; height: 18px; margin-top: 3px; }

.day {
  position: relative;
  align-self: center;
  margin: 66px 0 25px;
  padding: 0 20px;
  border-radius: 14px;
  background: #18181a;
  color: #9c9ca0;
  font-size: 24px;
  font-weight: 600;
  line-height: 37px;
}

.text { padding: 11px 19px 16px; }
.text.out { margin-top: 23px; padding-bottom: 14px; }
.text p { margin: 0; color: #fff; font-size: 30px; line-height: 41px; }
.text .stamp { position: absolute; right: 19px; bottom: 10px; }
.emoji { display: inline-block; width: 36px; height: 36px; margin: -8px 3px; vertical-align: 2px; }
.thumb { width: 38px; height: 40px; margin: -10px 3px; }

/* Composer */
.composer {
  display: flex;
  flex-direction: column;
  justify-content: space-between;
  height: 148px;
  padding: 13px 0 15px;
  border-top: 1px solid #2a2a2a;
  background: #171717;
}

.row { display: flex; align-items: center; padding: 0 31px 0 25px; }

.field {
  flex: 1;
  min-width: 0;
  display: flex;
  align-items: center;
  height: 57px;
  margin: 0 35px 0 25px;
  padding-right: 21px;
  border: 1px solid #3a3a3c;
  border-radius: 29px;
  background: #2b2b2d;
}

.field input {
  flex: 1;
  min-width: 0;
  height: 100%;
  padding: 0 24px;
  border: 0;
  outline: 0;
  background: none;
  color: #fff;
  font: inherit;
  font-size: 30px;
}

.row > .icon:last-child { margin-left: 36px; }
.home { align-self: center; width: 262px; height: 10px; border-radius: 5px; background: #fff; }
```
